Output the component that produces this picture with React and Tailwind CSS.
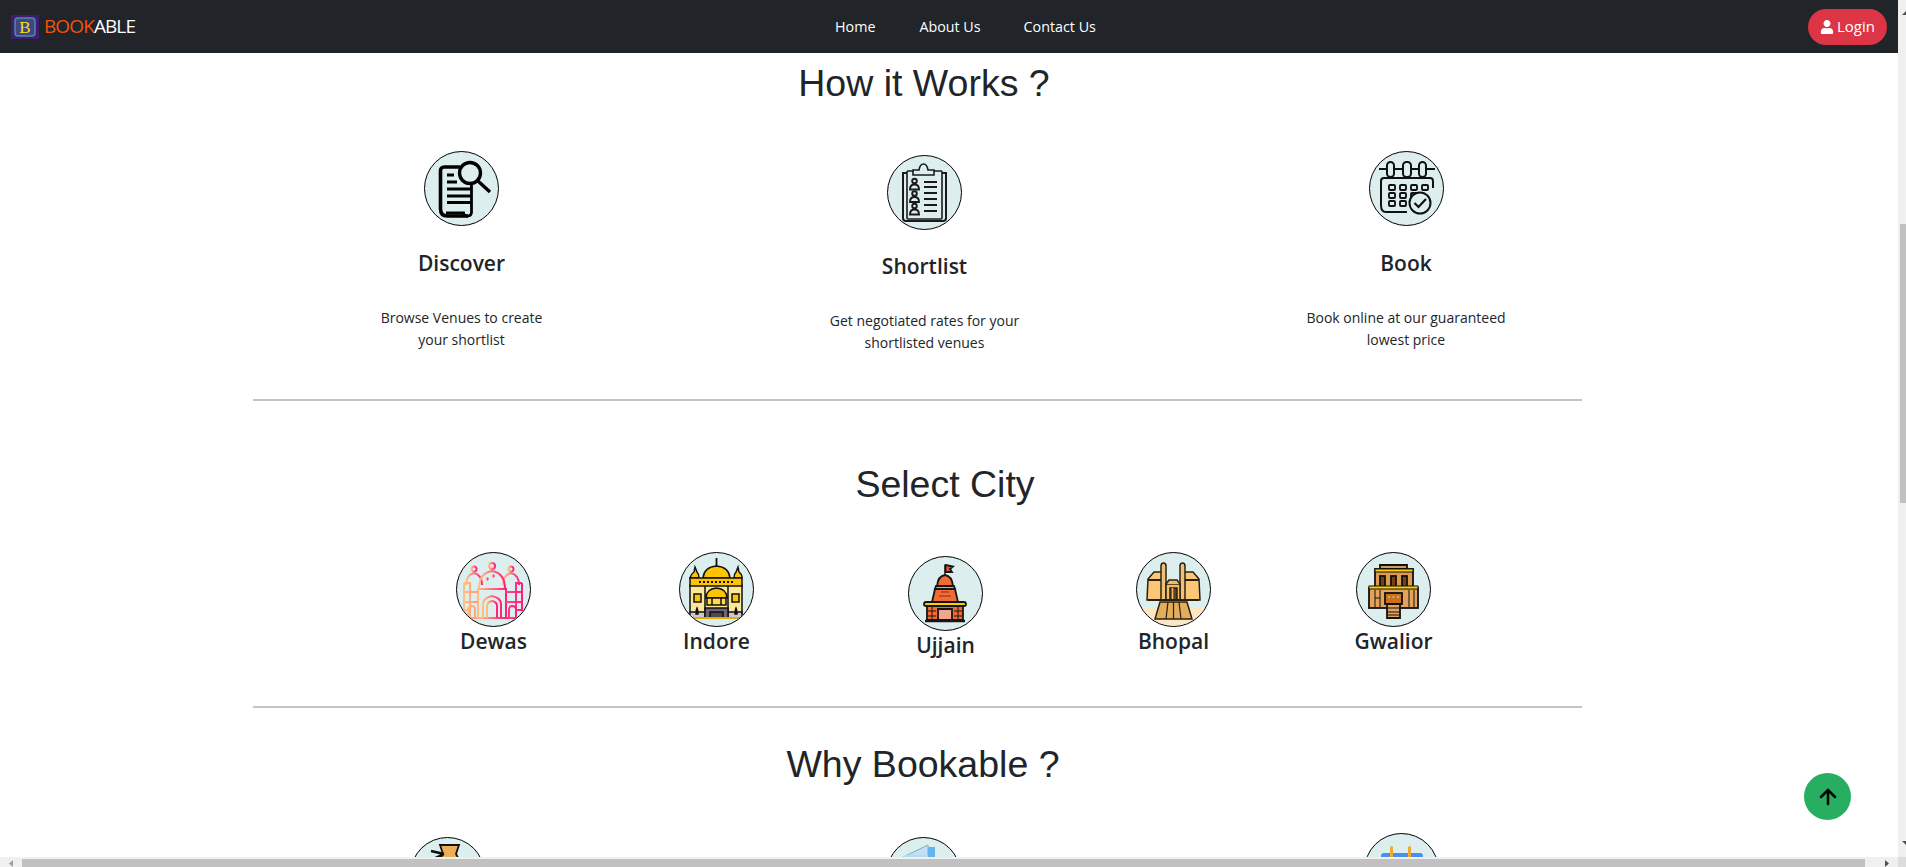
import React from "react";
import { FaUser } from "react-icons/fa";
import { FiArrowUp } from "react-icons/fi";

const ui = { fontFamily: '"Open Sans", "Noto Sans", sans-serif' };
const head = { fontFamily: '"Liberation Sans", Arial, sans-serif' };

function Disc({ className = "", children }) {
  return (
    <div className={`w-[75px] h-[75px] rounded-full border border-black bg-[#dcefee] overflow-hidden shrink-0 ${className}`}>
      <svg viewBox="0 0 75 75" width="75" height="75" className="-m-px block max-w-none">
        <defs>
          <clipPath id="disc"><circle cx="37.5" cy="37.5" r="36.5" /></clipPath>
          <linearGradient id="dewas" x1="0" x2="1" y1="0" y2="0">
            <stop offset="0" stopColor="#ffbf7f" />
            <stop offset="1" stopColor="#ff1f7d" />
          </linearGradient>
        </defs>
        <g clipPath="url(#disc)">{children}</g>
      </svg>
    </div>
  );
}

const DiscoverIcon = () => (
  <g fill="none" stroke="#000" strokeWidth="3">
    <path d="M36 16H20a3.500 3.500 0 0 0-3.500 3.500V58q0 7 7 7H44" strokeWidth="3.600" />
    <path d="M47.500 34V61q0 4-4 4-4 0-4-3H22" strokeWidth="2.800" />
    <path d="M23 24H30M23 31H33M23 38H47M23 45H47M23 51.500H47" strokeWidth="3.200" />
    <circle cx="46" cy="22" r="10.500" strokeWidth="3.400" fill="#dcefee" />
    <path d="M54 30L66 41" strokeWidth="3.400" />
  </g>
);

const ShortlistIcon = () => (
  <g fill="none" stroke="#1a1a1a" strokeWidth="1.600">
    <path d="M20 18H16V63q0 3 3 3H56q3 0 3-3V18H55" strokeWidth="2" />
    <rect x="20" y="16" width="35" height="48" rx="1" />
    <path d="M26 20V15H32Q33 9 36.500 9T41 15H47V20Z" fill="#dcefee" />
    {[23.5, 36, 48.5].map((y) => (
      <g key={y} strokeWidth="1.900">
        <circle cx="27.500" cy={y + 2.5} r="2.300" />
        <path d={`M23 ${y + 11}Q23 ${y + 6} 27.500 ${y + 6}Q32 ${y + 6} 32 ${y + 11}Z`} />
      </g>
    ))}
    <path d="M37 27H50M37 32H50M37 38H50M37 44H50M37 50H50M37 56H50" strokeWidth="1.800" />
  </g>
);

const BookIcon = () => (
  <g fill="none" stroke="#111" strokeWidth="2">
    <path d="M12 54V30q0-3 3-3H61q3 0 3 3v7" />
    <path d="M12 54q0 7 5 7H38" />
    <path d="M10 18H18M25 18H34M42 18H50M57 18H66" />
    <rect x="18" y="11" width="7" height="15" rx="3.500" />
    <rect x="34" y="11" width="8" height="15" rx="3.500" />
    <rect x="50" y="11" width="7" height="15" rx="3.500" />
    {[[20, 34], [31, 34], [42, 34], [53, 34], [20, 42], [31, 42], [42, 42], [20, 50], [31, 50]].map(([x, y]) => (
      <rect key={`${x}-${y}`} x={x} y={y} width="6" height="5" rx="1" strokeWidth="1.900" />
    ))}
    <circle cx="51" cy="52" r="10.500" fill="#dcefee" />
    <path d="M45.500 52L49.500 56L57 48" strokeWidth="2.200" />
  </g>
);

const DewasIcon = () => (
  <g fill="none" stroke="url(#dewas)" strokeWidth="2">
    <path d="M8 31H14V66H60V31H66" />
    <path d="M8 31V58H14M66 31V58H60" />
    <path d="M10 33Q10 23 18 21Q26 23 26 33" />
    <circle cx="18" cy="17" r="2.500" />
    <path d="M18 12V14" />
    <path d="M47 33Q47 23 55 21Q63 23 63 33" />
    <circle cx="55" cy="17" r="2.500" />
    <path d="M55 12V14" />
    <path d="M23 37Q23 21 36 19Q49 21 49 37Z" />
    <circle cx="36" cy="14" r="3" />
    <path d="M36 9V11" />
    <path d="M22 37H50V66H22Z" />
    <path d="M22 44H50" />
    <path d="M27 66V52Q27 46 36 44Q45 46 45 52V66" />
    <path d="M31 66V54Q31 50 36 49Q41 50 41 54V66" />
    <path d="M8 40H22M50 40H66M9 50H22M50 50H65" />
    <path d="M12 66V58Q12 54 16 54Q19 54 19 58V66M53 66V58Q53 54 56 54Q60 54 60 58V66" />
    <circle cx="31" cy="27" r="0.700" /><circle cx="37" cy="24" r="0.700" />
  </g>
);

const IndoreIcon = () => (
  <g stroke="#111" strokeWidth="1.500">
    <rect x="11" y="33" width="52" height="33" fill="#fbe79a" />
    <path d="M11 66H63V60H11Z" fill="#cfc8cf" />
    <path d="M37.500 6V16" strokeWidth="1.800" />
    <path d="M24 26Q25 15 37.500 14Q50 15 51 26Z" fill="#ffc400" />
    <path d="M11 26Q12 22 15 20L16 15L18 20Q20 22 20 26Z" fill="#ffc400" />
    <path d="M55 26Q55 22 57 20L59 15L60 20Q63 22 63 26Z" fill="#ffc400" />
    <rect x="11" y="26" width="52" height="8" fill="#ffc400" />
    <path d="M20 30H54" strokeDasharray="2 2" strokeWidth="1.800" />
    <path d="M26 34V66M49 34V66" />
    <rect x="15" y="42" width="7" height="8" fill="#ffc400" />
    <rect x="53" y="42" width="7" height="8" fill="#ffc400" />
    <path d="M27 46Q27 37 37.500 36Q48 37 48 46Z" fill="#ffc400" />
    <rect x="28" y="46" width="19" height="7" fill="#ffd84d" />
    <path d="M33 46V53M42 46V53" />
    <path d="M26 66V56H49V66Z" fill="#6f6472" />
    <path d="M31 66V60H44V66Z" fill="#4f4653" />
    <path d="M11 66H63" stroke="#e0b000" strokeWidth="2" />
    <path d="M17 62Q17 58 18 56Q19 58 19 62ZM56 62Q56 58 57 56Q58 58 58 62Z" fill="#111" />
  </g>
);

const UjjainIcon = () => (
  <g stroke="#161616" strokeWidth="1.800">
    <path d="M37 22V9" strokeWidth="1.400" />
    <path d="M37.500 9L45 10.500L42 13L44 16L37.500 16Z" fill="#e4572e" />
    <path d="M29 30Q30 20 37 19Q44 20 45 30Z" fill="#f26b35" />
    <path d="M28 30H46L47 33H27Z" fill="#e8c100" />
    <path d="M27 33H47L50 46H24Z" fill="#f26b35" />
    <path d="M33 36H41M31 40H43" stroke="#8a2c10" strokeWidth="1.200" />
    <path d="M18 46H56Q58 46 58 48.500Q58 50 56 50H18Q16 50 16 48.500Q16 46 18 46Z" fill="#fcd000" />
    <path d="M19 50H55V64H19Z" fill="#f26b35" />
    <path d="M30 64V53H44V64Z" fill="#f4a58a" />
    <path d="M20 55H28M20 60H28M46 55H54M46 60H54" strokeWidth="1.200" />
    <path d="M24 50V64M50 50V64" strokeWidth="1" />
    <path d="M17 65H57" strokeWidth="2.400" />
  </g>
);

const BhopalIcon = () => (
  <g stroke="#2b2010" strokeWidth="1.500">
    <path d="M0 56H75V75H0Z" fill="#fde6c2" stroke="none" />
    <path d="M12 27L18 20H28V48H11Z" fill="#fbc777" />
    <path d="M63 27L57 20H47V48H64Z" fill="#fbc777" />
    <path d="M12 28H28M63 28H47" strokeWidth="1.800" />
    <path d="M24 50L19 67H56L51 50Z" fill="#e3ad5a" />
    <path d="M32 50L30 67M43 50L45 67M37.500 50V67" strokeWidth="1.200" />
    <path d="M25 48V14Q25 11 27.500 11Q30 11 30 14V48Z" fill="#eec178" />
    <path d="M44 48V14Q44 11 46.500 11Q49 11 49 14V48Z" fill="#eec178" />
    <path d="M30 32H44V48H30Z" fill="#efbb68" />
    <path d="M30 32L33 28H41L44 32" fill="#efbb68" />
    <path d="M34 36H41V48H34Z" fill="#5b4423" />
    <path d="M36.500 36V48" stroke="#efbb68" />
    <path d="M12 48H63" strokeWidth="1.800" />
  </g>
);

const GwaliorIcon = () => (
  <g stroke="#111" strokeWidth="1.800">
    <path d="M24 17V13H51V17Z" fill="#d99a5b" />
    <rect x="19" y="17" width="38" height="19" fill="#dd9a50" />
    <rect x="19" y="17" width="38" height="3" fill="#fcd000" strokeWidth="1" />
    <rect x="24" y="24" width="5" height="11" fill="#7a3f12" />
    <rect x="35" y="24" width="5" height="11" fill="#7a3f12" />
    <rect x="46" y="24" width="5" height="11" fill="#7a3f12" />
    <rect x="13" y="36" width="49" height="20" fill="#e4a25a" />
    <rect x="13" y="34" width="49" height="3" fill="#fcd000" strokeWidth="1" />
    <path d="M19 38V55M24 38V55M19 46H24M53 38V55M58 38V55" strokeWidth="1" />
    <rect x="29" y="41" width="17" height="11" fill="#c9711f" />
    <circle cx="33" cy="45" r="0.800" fill="#ffe9b0" stroke="none" />
    <circle cx="37.500" cy="45" r="0.800" fill="#ffe9b0" stroke="none" />
    <circle cx="42" cy="45" r="0.800" fill="#ffe9b0" stroke="none" />
    <path d="M31 52H44V66H31Z" fill="#e4a25a" />
    <path d="M31 56H44M31 60H44M31 63H44" strokeWidth="1" />
  </g>
);

const Bag = () => (
  <g stroke="#111" strokeWidth="1.800">
    <path d="M30 8H49L46 17Q52 27 52 40Q52 55 39 55Q26 55 26 40Q26 27 33 17Z" fill="#eeae57" />
    <path d="M21 14L34 17M23 22L34 17" strokeWidth="2.400" />
  </g>
);
const Box = () => (
  <g>
    <path d="M17 20L42 8V30H17Z" fill="#c3e0f4" stroke="#84aac6" />
    <rect x="17" y="18" width="31" height="45" rx="3" fill="#b2dcf8" />
    <rect x="42" y="10" width="7" height="50" fill="#66b4ee" />
  </g>
);
const Cal = () => (
  <g>
    <rect x="17" y="20" width="42" height="40" rx="3" fill="#4a8ff0" />
    <rect x="26" y="13" width="3" height="26" rx="1.500" fill="#f3a92e" />
    <rect x="44" y="13" width="3" height="26" rx="1.500" fill="#f3a92e" />
  </g>
);

const steps = [
  { t: "Discover", a: "Browse Venues to create", b: "your shortlist", icon: <DiscoverIcon />, extra: "", tm: "mt-[24px]" },
  { t: "Shortlist", a: "Get negotiated rates for your", b: "shortlisted venues", icon: <ShortlistIcon />, extra: "pt-1", tm: "mt-[23px]" },
  { t: "Book", a: "Book online at our guaranteed", b: "lowest price", icon: <BookIcon />, extra: "", tm: "mt-[24px]" },
];

const cities = [
  { n: "Dewas", icon: <DewasIcon />, c: "ml-[203px]" },
  { n: "Indore", icon: <IndoreIcon />, c: "ml-[148px]" },
  { n: "Ujjain", icon: <UjjainIcon />, c: "ml-[154px] pt-1" },
  { n: "Bhopal", icon: <BhopalIcon />, c: "ml-[153px]" },
  { n: "Gwalior", icon: <GwaliorIcon />, c: "ml-[145px]" },
];

function Rule() {
  return <div className="h-[2px] bg-[#c4c4c4] w-[1329px]" />;
}

export default function App() {
  return (
    <div className="h-screen w-full overflow-hidden flex flex-col bg-white text-[#212529]" style={ui}>
      <div className="flex flex-1 min-h-0">
        <div className="relative flex-1 min-w-0 flex flex-col">
          <nav className="h-[53px] shrink-0 bg-[#212529] flex items-center relative">
            <div className="flex items-center ml-[11px] w-[124px]">
              <svg width="28" height="24" viewBox="0 0 28 24" className="block shrink-0">
                <rect width="28" height="24" fill="#3d1c72" />
                <rect x="4" y="3" width="20" height="18" rx="3" fill="#41467f" stroke="#4d8aa8" strokeWidth="1.500" />
                <text x="14" y="18" textAnchor="middle" fontSize="17" fontWeight="400" fill="#f0e020" style={{ fontFamily: '"Liberation Serif", serif' }}>B</text>
              </svg>
              <span className="ml-[5px] text-[19px] leading-none tracking-[-0.9px] font-normal whitespace-nowrap">
                <span className="text-[#f0530c]">BOOK</span><span className="text-white">ABLE</span>
              </span>
            </div>
            <div className="flex items-center text-white text-[14.300px] ml-[700px]">
              <span>Home</span>
              <span className="ml-[44px]">About Us</span>
              <span className="ml-[43px]">Contact Us</span>
            </div>
            <button className="ml-auto mr-[11px] w-[79px] h-[36px] rounded-full bg-[#dc3545] text-white text-[15px] flex items-center justify-center gap-[3px]">
              <FaUser className="w-[14px] h-[14px]" />
              <span>Login</span>
            </button>
          </nav>

          <main className="flex-1 min-h-0 overflow-hidden pl-[253px]">
            <h1 className="w-[1342px] text-center text-[37.500px] leading-[48px] mt-[6px]" style={head}>How it Works ?</h1>

            <div className="grid grid-cols-[417px_509px_454px] w-[1380px] mt-[44px] h-[248px] items-start">
              {steps.map((s) => (
                <div key={s.t} className={`flex flex-col items-center ${s.extra}`}>
                  <Disc>{s.icon}</Disc>
                  <div className={`${s.tm} text-[21px] leading-[26px] font-semibold`}>{s.t}</div>
                  <div className="mt-[31px] text-[14px] leading-[22px] text-center">
                    <div>{s.a}</div>
                    <div>{s.b}</div>
                  </div>
                </div>
              ))}
            </div>
            <Rule />

            <h1 className="w-[1384px] text-center text-[37.500px] leading-[48px] mt-[59px]" style={head}>Select City</h1>
            <div className="flex items-start mt-[44px] h-[154px]">
              {cities.map((c) => (
                <div key={c.n} className={`w-[75px] flex flex-col items-center ${c.c}`}>
                  <Disc>{c.icon}</Disc>
                  <div className="text-[21px] leading-[26px] font-semibold whitespace-nowrap mt-px">{c.n}</div>
                </div>
              ))}
            </div>
            <Rule />

            <h1 className="w-[1340px] text-center text-[37.500px] leading-[48px] mt-[32px]" style={head}>Why Bookable ?</h1>
            <div className="flex items-start mt-[45px]">
              <Disc className="ml-[157px] mt-[4px]"><Bag /></Disc>
              <Disc className="ml-[401px] mt-[4px]"><Box /></Disc>
              <Disc className="ml-[403px]"><Cal /></Disc>
            </div>
          </main>

          <button className="absolute left-[1804px] top-[773px] w-[47px] h-[47px] rounded-full bg-[#27ae60] flex items-center justify-center text-black">
            <FiArrowUp className="w-[24px] h-[24px]" strokeWidth={2.500} />
          </button>
        </div>

        <aside className="w-[8px] shrink-0 bg-[#f0f0f0] relative overflow-hidden">
          <div className="mt-[224px] ml-[2px] h-[279px] bg-[#c1c1c1]" />
          <svg width="8" height="6" viewBox="0 0 8 6" className="absolute left-[4px] top-[841px]"><path d="M0 0H8L4 4Z" fill="#505050" /></svg>
          <svg width="8" height="6" viewBox="0 0 8 6" className="absolute left-[4px] top-[11px]"><path d="M0 4H8L4 0Z" fill="#505050" /></svg>
        </aside>
      </div>
      <div className="h-[10px] shrink-0 bg-[#f0f0f0] flex relative">
        <div className="ml-[22px] w-[1843px] mt-[2px] bg-[#c1c1c1]" />
        <svg width="5" height="7" viewBox="0 0 5 7" className="absolute left-[9px] top-[3px]"><path d="M4 0V7L0 3.500Z" fill="#a0a0a0" /></svg>
        <svg width="5" height="7" viewBox="0 0 5 7" className="absolute left-[1885px] top-[3px]"><path d="M0 0V7L4 3.500Z" fill="#505050" /></svg>
        <div className="absolute right-0 top-0 w-[8px] h-[10px] bg-[#dcdcdc]" />
      </div>
    </div>
  );
}
